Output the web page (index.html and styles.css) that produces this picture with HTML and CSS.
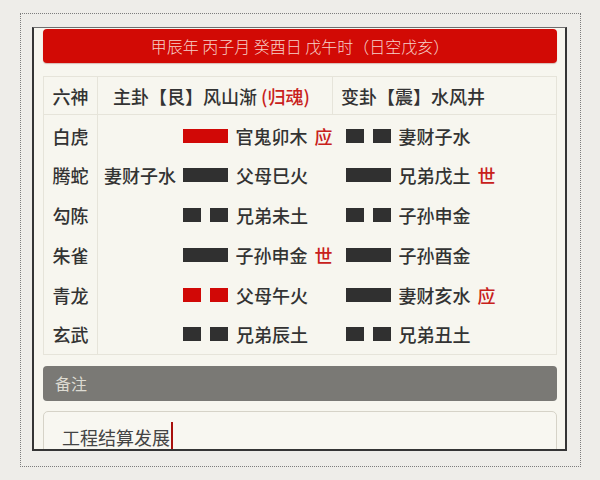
FILE: index.html
```html
<!DOCTYPE html>
<html lang="zh">
<head>
<meta charset="utf-8">
<link rel="stylesheet" href="styles.css">
</head>
<body>
<div class="frame">
  <div class="panel">
    <div class="date-bar">甲辰年 丙子月 癸酉日 戊午时（日空戊亥）</div>
    <table class="gua">
      <thead>
        <tr>
          <th class="c-god">六神</th>
          <th class="c-main">主卦【艮】风山渐 <span class="red">(归魂)</span></th>
          <th class="c-change">变卦【震】水风井</th>
        </tr>
      </thead>
      <tbody>
        <tr>
          <td class="c-god">白虎</td>
          <td class="c-main"><div class="line"><span class="fu"></span><span class="yao yang red-bar"><i></i></span><span class="name">官鬼卯木<em class="mark">应</em></span></div></td>
          <td class="c-change"><div class="line"><span class="yao yin"><i></i><i></i></span><span class="name">妻财子水</span></div></td>
        </tr>
        <tr>
          <td class="c-god">腾蛇</td>
          <td class="c-main"><div class="line"><span class="fu">妻财子水</span><span class="yao yang"><i></i></span><span class="name">父母巳火</span></div></td>
          <td class="c-change"><div class="line"><span class="yao yang"><i></i></span><span class="name">兄弟戊土<em class="mark">世</em></span></div></td>
        </tr>
        <tr>
          <td class="c-god">勾陈</td>
          <td class="c-main"><div class="line"><span class="fu"></span><span class="yao yin"><i></i><i></i></span><span class="name">兄弟未土</span></div></td>
          <td class="c-change"><div class="line"><span class="yao yin"><i></i><i></i></span><span class="name">子孙申金</span></div></td>
        </tr>
        <tr>
          <td class="c-god">朱雀</td>
          <td class="c-main"><div class="line"><span class="fu"></span><span class="yao yang"><i></i></span><span class="name">子孙申金<em class="mark">世</em></span></div></td>
          <td class="c-change"><div class="line"><span class="yao yang"><i></i></span><span class="name">子孙酉金</span></div></td>
        </tr>
        <tr>
          <td class="c-god">青龙</td>
          <td class="c-main"><div class="line"><span class="fu"></span><span class="yao yin red-bar"><i></i><i></i></span><span class="name">父母午火</span></div></td>
          <td class="c-change"><div class="line"><span class="yao yang"><i></i></span><span class="name">妻财亥水<em class="mark">应</em></span></div></td>
        </tr>
        <tr>
          <td class="c-god">玄武</td>
          <td class="c-main"><div class="line"><span class="fu"></span><span class="yao yin"><i></i><i></i></span><span class="name">兄弟辰土</span></div></td>
          <td class="c-change"><div class="line"><span class="yao yin"><i></i><i></i></span><span class="name">兄弟丑土</span></div></td>
        </tr>
      </tbody>
    </table>
    <div class="note-bar">备注</div>
    <div class="note-box"><span class="note-text">工程结算发展</span><span class="caret"></span></div>
  </div>
</div>
</body>
</html>
```

FILE: styles.css
```css
* { box-sizing: border-box; }

html, body {
  margin: 0;
  padding: 0;
  background: #eeede9;
  font-family: "Noto Sans CJK SC", "Noto Sans", sans-serif;
  color: #333;
}

.frame {
  margin: 13px 0 0 20px;
  width: 561px;
  height: 454px;
  border: 1px dotted #7d7d7d;
  padding: 13px 0 0 11px;
}

.panel {
  width: 535px;
  height: 424px;
  background: #f7f6ef;
  border: 2px solid #353535;
  border-top: 1px solid #6e6e6e;
  padding: 1px 8px 0 9px;
  overflow: hidden;
}

.date-bar {
  height: 34px;
  background: #d20a05;
  border-radius: 4px;
  color: #f6d2ca;
  font-size: 16px;
  font-weight: 300;
  line-height: 34px;
  text-align: center;
  box-shadow: 0 1px 1px rgba(120, 0, 0, 0.25);
}

.gua {
  margin-top: 13px;
  width: 514px;
  border-collapse: collapse;
  table-layout: fixed;
  border: 1px solid #e6e4da;
  font-size: 18px;
  font-weight: 500;
}

.gua th {
  height: 38px;
  font-weight: 500;
  text-align: left;
  border: 1px solid #e6e4da;
  padding: 0;
  white-space: nowrap;
}

.gua th.c-god { text-align: center; }
.gua th.c-main { padding-left: 15px; }
.gua th.c-change { padding-left: 8px; }

.c-god { width: 54px; }
.c-main { width: 235px; }

.gua td {
  height: 40px;
  padding: 0;
}

.gua td.c-god {
  text-align: center;
  border-right: 1px solid #e6e4da;
}

.gua tbody tr:first-child td { padding-top: 2px; }

.red { color: #c8211b; }

.line {
  display: flex;
  align-items: center;
  white-space: nowrap;
}

.fu {
  width: 78px;
  text-align: right;
  margin-right: 7px;
}

.c-change .line { padding-left: 13px; }

.yao {
  display: flex;
  justify-content: space-between;
  width: 45px;
  height: 14px;
  margin-right: 8px;
  flex: none;
}

.yao i {
  display: block;
  height: 14px;
  background: #303030;
}

.yang i { width: 45px; }
.yin i { width: 18px; }

.red-bar i { background: #d10806; }

.mark {
  font-style: normal;
  color: #c8211b;
  margin-left: 7px;
}

.note-bar {
  margin-top: 11px;
  height: 35px;
  background: #7a7975;
  border-radius: 4px;
  color: #dddbd2;
  font-size: 16px;
  line-height: 35px;
  padding-left: 12px;
}

.note-box {
  margin-top: 10px;
  height: 80px;
  border: 1px solid #d6d3c8;
  border-radius: 5px;
  background: #f8f7f1;
  padding: 10px 0 0 18px;
  display: flex;
  align-items: flex-start;
  font-size: 18px;
  color: #444;
}

.note-text {
  line-height: 28px;
  margin-top: 1px;
}

.caret {
  display: inline-block;
  width: 2px;
  height: 29px;
  background: #a8100d;
  margin-left: 1px;
}
```
